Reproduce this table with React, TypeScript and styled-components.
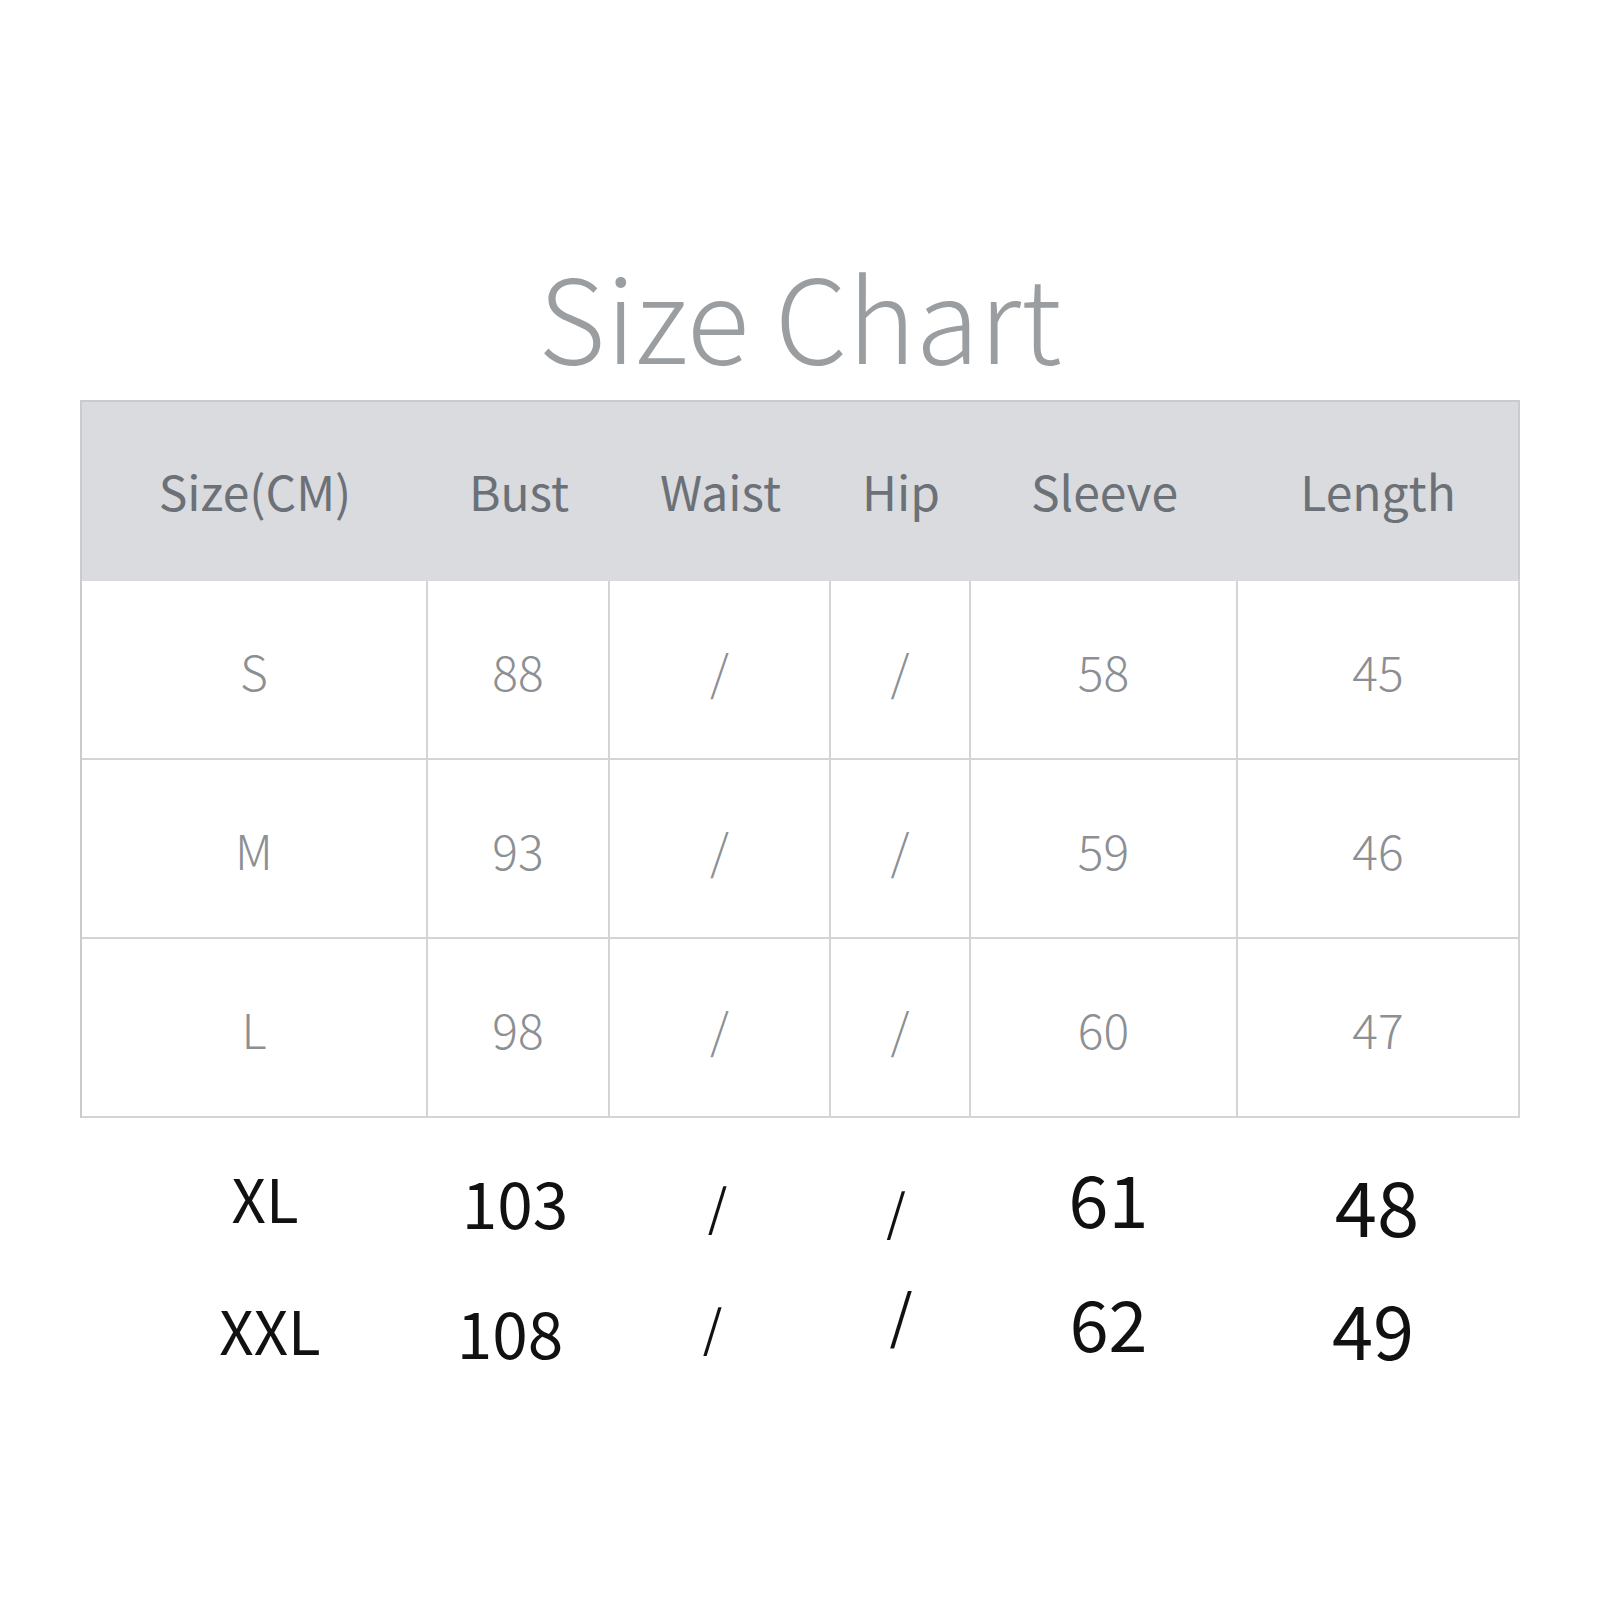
import React from "react";
import styled, { createGlobalStyle } from "styled-components";

const Global = createGlobalStyle`
  html, body { margin: 0; padding: 0; background: #ffffff; }
  body { font-family: "Noto Sans CJK KR", "Noto Sans", sans-serif; }
`;

const COLS = "346px 182px 221px 140px 267px 282px";

const Page = styled.div`
  width: 1600px;
  height: 1600px;
  background: #ffffff;
  display: flex;
  flex-direction: column;
  align-items: flex-start;
  padding: 255px 0 0 80px;
  box-sizing: border-box;
`;

const Title = styled.h1`
  margin: 0 0 29px 0;
  width: 1440px;
  text-align: center;
  font-family: "Noto Sans CJK KR", "Noto Sans", sans-serif;
  font-weight: 300;
  font-size: 116px;
  line-height: 1;
  color: #9b9ea1;
`;

const Table = styled.div`
  display: grid;
  grid-template-columns: ${COLS};
  grid-auto-rows: 179px;
  border-left: 2px solid #cacbcd;
  border-top: 2px solid #cacbcd;
  box-sizing: border-box;
  width: 1440px;
`;

const HeadCell = styled.div<{ $last?: boolean }>`
  display: flex;
  align-items: center;
  justify-content: center;
  background: #d9dbdf;
  color: #6c7077;
  font-size: 48px;
  font-weight: 400;
  border-right: ${(p) => (p.$last ? "2px solid #cacbcd" : "none")};
  border-bottom: 2px solid #d9dbdf;
  box-sizing: border-box;
  padding-bottom: 2px;
`;

const BodyCell = styled.div`
  display: flex;
  align-items: center;
  justify-content: center;
  color: #8c8f93;
  font-size: 48px;
  font-weight: 300;
  border-right: 2px solid #d3d4d6;
  border-bottom: 2px solid #d3d4d6;
  box-sizing: border-box;
`;

const Extra = styled.div`
  display: grid;
  grid-template-columns: ${COLS};
  grid-auto-rows: 132px;
  margin-top: 16px;
`;

const ExtraCell = styled.div`
  display: flex;
  align-items: center;
  justify-content: center;
`;

const Big = styled.span<{ $size: number; $dx: number; $dy: number }>`
  font-family: "Noto Sans CJK KR", "Noto Sans", sans-serif;
  font-size: ${(p) => p.$size}px;
  line-height: 1;
  color: #111111;
  font-weight: 400;
  margin-left: ${(p) => p.$dx * 2}px;
  margin-top: ${(p) => p.$dy * 2}px;
`;

const headers = ["Size(CM)", "Bust", "Waist", "Hip", "Sleeve", "Length"];
const rows = [
  ["S", "88", "/", "/", "58", "45"],
  ["M", "93", "/", "/", "59", "46"],
  ["L", "98", "/", "/", "60", "47"],
];

type BigItem = { t: string; s: number; dx: number; dy: number };
const extra: BigItem[][] = [
  [
    { t: "XL", s: 60, dx: 12, dy: -3 },
    { t: "103", s: 64, dx: -2, dy: 1 },
    { t: "/", s: 50, dx: -1, dy: 4 },
    { t: "/", s: 50, dx: -3, dy: 9 },
    { t: "61", s: 72, dx: 6, dy: -3 },
    { t: "48", s: 76, dx: 0, dy: 4 },
  ],
  [
    { t: "XXL", s: 60, dx: 17, dy: -3 },
    { t: "108", s: 64, dx: -7, dy: -1 },
    { t: "/", s: 50, dx: -6, dy: -7 },
    { t: "/", s: 59, dx: 2, dy: -20 },
    { t: "62", s: 70, dx: 6, dy: -10 },
    { t: "49", s: 74, dx: -4, dy: -4 },
  ],
];

export default function App() {
  return (
    <>
      <Global />
      <Page>
        <Title>Size Chart</Title>
        <Table>
          {headers.map((h, i) => (
            <HeadCell key={h} $last={i === headers.length - 1}>
              {h}
            </HeadCell>
          ))}
          {rows.map((r, ri) =>
            r.map((c, ci) => <BodyCell key={`${ri}-${ci}`}>{c}</BodyCell>)
          )}
        </Table>
        <Extra>
          {extra.map((r, ri) =>
            r.map((c, ci) => (
              <ExtraCell key={`${ri}-${ci}`}>
                <Big $size={c.s} $dx={c.dx} $dy={c.dy}>
                  {c.t}
                </Big>
              </ExtraCell>
            ))
          )}
        </Extra>
      </Page>
    </>
  );
}
